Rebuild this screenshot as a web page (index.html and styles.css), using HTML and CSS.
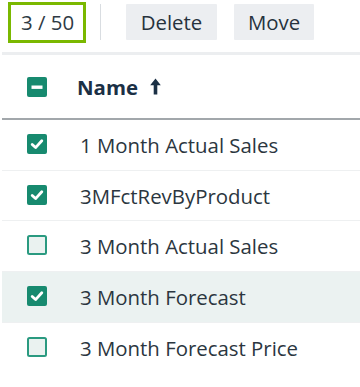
FILE: index.html
```html
<!DOCTYPE html>
<html>
<head>
<meta charset="utf-8">
<link rel="stylesheet" href="styles.css">
</head>
<body>
<div class="toolbar">
  <div class="counter">3 / 50</div>
  <div class="vsep"></div>
  <button class="btn btn-delete">Delete</button>
  <button class="btn btn-move">Move</button>
</div>
<div class="table">
  <div class="thead">
    <svg class="cb" width="20" height="20" viewBox="0 0 20 20"><rect x="0" y="0" width="20" height="20" rx="2" fill="#178a6f"/><rect x="4.5" y="8.5" width="11" height="3.4" fill="#fff"/></svg>
    <span class="th-name">Name</span>
    <svg class="sort" width="11" height="17" viewBox="0 0 11 17"><path d="M5.5 0.5 L10.8 7.2 L7.3 7.2 L7.3 16.5 L3.7 16.5 L3.7 7.2 L0.2 7.2 Z" fill="#1b3045"/></svg>
  </div>
  <div class="row">
    <svg class="cb" width="20" height="20" viewBox="0 0 20 20"><rect x="0" y="0" width="20" height="20" rx="2" fill="#178a6f"/><polyline points="5.2,10.4 8.6,13.6 14.8,6.8" fill="none" stroke="#fff" stroke-width="2.8" stroke-linecap="round" stroke-linejoin="round"/></svg>
    <span class="label">1 Month Actual Sales</span>
  </div>
  <div class="row">
    <svg class="cb" width="20" height="20" viewBox="0 0 20 20"><rect x="0" y="0" width="20" height="20" rx="2" fill="#178a6f"/><polyline points="5.2,10.4 8.6,13.6 14.8,6.8" fill="none" stroke="#fff" stroke-width="2.8" stroke-linecap="round" stroke-linejoin="round"/></svg>
    <span class="label">3MFctRevByProduct</span>
  </div>
  <div class="row">
    <svg class="cb" width="20" height="20" viewBox="0 0 20 20"><rect x="1" y="1" width="18" height="18" rx="1.5" fill="#eaf2f0" stroke="#2a9a80" stroke-width="2"/></svg>
    <span class="label">3 Month Actual Sales</span>
  </div>
  <div class="row row-hl">
    <svg class="cb" width="20" height="20" viewBox="0 0 20 20"><rect x="0" y="0" width="20" height="20" rx="2" fill="#178a6f"/><polyline points="5.2,10.4 8.6,13.6 14.8,6.8" fill="none" stroke="#fff" stroke-width="2.8" stroke-linecap="round" stroke-linejoin="round"/></svg>
    <span class="label">3 Month Forecast</span>
  </div>
  <div class="row row-last">
    <svg class="cb" width="20" height="20" viewBox="0 0 20 20"><rect x="1" y="1" width="18" height="18" rx="1.5" fill="#eaf2f0" stroke="#2a9a80" stroke-width="2"/></svg>
    <span class="label">3 Month Forecast Price</span>
  </div>
</div>
</body>
</html>
```

FILE: styles.css
```css
html, body {
  margin: 0;
  padding: 0;
  background: #ffffff;
}
body {
  width: 360px;
  height: 387px;
  overflow: hidden;
  font-family: "Open Sans", "Liberation Sans", sans-serif;
  color: #2b3640;
}
.toolbar {
  display: flex;
  align-items: center;
  height: 44px;
  padding: 0 0 0 8px;
  margin-bottom: 8px;
}
.counter {
  box-sizing: border-box;
  height: 41px;
  width: 78px;
  margin-top: 1px;
  border: 3px solid #7ab800;
  font-size: 20.4px;
  line-height: 35px;
  padding-left: 10px;
  color: #2e3a44;
}
.vsep {
  width: 1px;
  height: 36px;
  background: #d9dde1;
  margin-left: 14px;
}
.btn {
  font-family: "Open Sans", "Liberation Sans", sans-serif;
  font-size: 20.4px;
  color: #26323d;
  background: #eceef1;
  border: 0;
  border-radius: 1px;
  height: 36px;
  padding: 0;
  margin: 0;
  line-height: 36px;
}
.btn-delete {
  margin-left: 25px;
  width: 91px;
}
.btn-move {
  margin-left: 17px;
  width: 80px;
}
.table {
  margin-left: 2px;
  border-top: 3px solid #eceef0;
}
.thead {
  display: flex;
  align-items: center;
  height: 63px;
  border-bottom: 2px solid #a2a7ab;
  padding-left: 25px;
}
.cb {
  display: block;
  flex: none;
}
.th-name {
  margin-left: 30px;
  font-weight: 700;
  font-size: 20.4px;
  color: #1b3045;
}
.sort {
  margin-left: 12px;
  margin-top: -1px;
}
.row {
  display: flex;
  align-items: center;
  height: 49.7px;
  border-bottom: 1px solid #eef0f1;
  padding-left: 25px;
}
.row .cb {
  margin-top: -2px;
}
.row-hl {
  background: #ebf2f1;
}
.row-last {
  border-bottom: 0;
}
.label {
  margin-left: 33px;
  font-size: 20.4px;
  color: #2b3640;
}
```
